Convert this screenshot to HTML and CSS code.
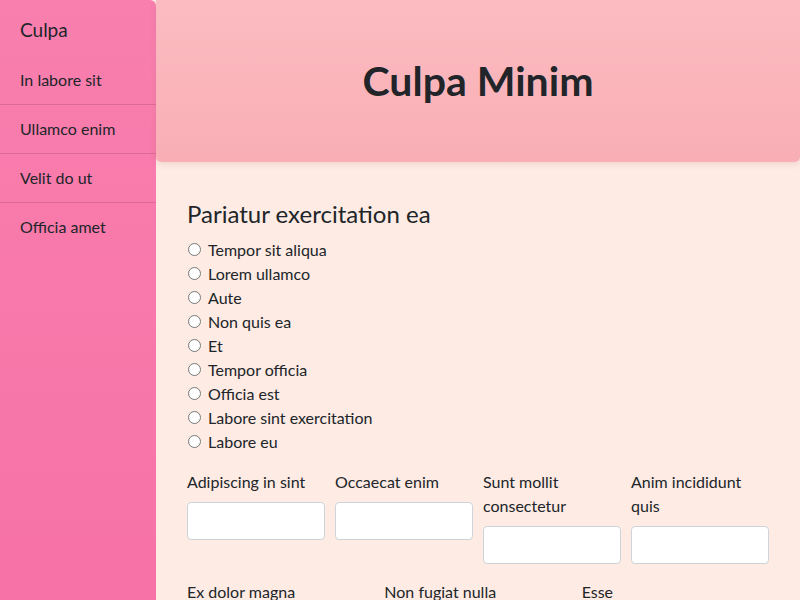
FILE: index.html
```html
<!DOCTYPE html>
<html>
<head>
<meta charset="utf-8">
<link rel="stylesheet" href="styles.css">
</head>
<body>
<div class="app">
  <aside class="sidebar">
    <div class="brand">Culpa</div>
    <nav class="nav">
      <a class="nav-item">In labore sit</a>
      <a class="nav-item">Ullamco enim</a>
      <a class="nav-item">Velit do ut</a>
      <a class="nav-item">Officia amet</a>
    </nav>
  </aside>
  <main class="main">
    <header class="hero"><h1>Culpa Minim</h1></header>
    <section class="content">
      <h2 class="section-title">Pariatur exercitation ea</h2>
      <div class="radios">
        <label class="radio"><input type="radio" name="r"> Tempor sit aliqua</label>
        <label class="radio"><input type="radio" name="r"> Lorem ullamco</label>
        <label class="radio"><input type="radio" name="r"> Aute</label>
        <label class="radio"><input type="radio" name="r"> Non quis ea</label>
        <label class="radio"><input type="radio" name="r"> Et</label>
        <label class="radio"><input type="radio" name="r"> Tempor officia</label>
        <label class="radio"><input type="radio" name="r"> Officia est</label>
        <label class="radio"><input type="radio" name="r"> Labore sint exercitation</label>
        <label class="radio"><input type="radio" name="r"> Labore eu</label>
      </div>
      <div class="row four">
        <div class="field"><label>Adipiscing in sint</label><input type="text"></div>
        <div class="field"><label>Occaecat enim</label><input type="text"></div>
        <div class="field"><label>Sunt mollit consectetur</label><input type="text"></div>
        <div class="field"><label>Anim incididunt quis</label><input type="text"></div>
      </div>
      <div class="row three">
        <div class="field"><label>Ex dolor magna</label><input type="text"></div>
        <div class="field"><label>Non fugiat nulla</label><input type="text"></div>
        <div class="field"><label>Esse</label><input type="text"></div>
      </div>
    </section>
  </main>
</div>
</body>
</html>
```
FILE: styles.css
```css
* { box-sizing: border-box; }
html, body { margin: 0; height: 100%; }
body {
  font-family: Lato, "Open Sans", sans-serif;
  font-size: 16px;
  line-height: 1.5;
  color: #212529;
  background: #fdebe4;
  overflow: hidden;
}
.app { display: flex; height: 600px; }
.sidebar {
  width: 156px;
  flex: none;
  background: linear-gradient(to bottom, #f87fae, #f772a6);
  border-top-right-radius: 6px;
}
.brand {
  font-size: 19px;
  padding: 16px 20px 13px;
  line-height: 27px;
}
.nav { display: flex; flex-direction: column; }
.nav-item {
  font-size: 16px;
  padding: 12px 20px;
  line-height: 24px;
  border-bottom: 1px solid #dc6a96;
}
.nav-item:last-child { border-bottom: none; }
.main { flex: 1; display: flex; flex-direction: column; min-width: 0; }
.hero {
  flex: none;
  height: 162px;
  background: linear-gradient(to bottom, #fbbcc1, #f9aeb5);
  border-radius: 0 0 5px 5px;
  box-shadow: 0 2px 6px rgba(160, 90, 90, 0.15);
  display: flex;
  align-items: center;
  justify-content: center;
}
.hero h1 {
  margin: 0;
  font-size: 41px;
  font-weight: 700;
  line-height: 1.2;
}
.content { padding: 38px 31px 0 31px; }
.section-title {
  margin: 0 0 9px;
  font-size: 24px;
  font-weight: 400;
  line-height: 1.2;
}
.radios { display: flex; flex-direction: column; margin-bottom: 16px; }
.radio { display: flex; align-items: center; height: 24px; font-size: 16px; }
.radio input {
  margin: 0 7px 0 1px;
  width: 13px;
  height: 13px;
}
.row { display: grid; gap: 10px; margin-bottom: 16px; }
.row.four { grid-template-columns: repeat(4, 1fr); }
.row.three { grid-template-columns: repeat(3, 1fr); }
.field { display: flex; flex-direction: column; }
.field label { display: block; margin-bottom: 8px; font-size: 16px; line-height: 24px; }
.field input {
  height: 38px;
  width: 100%;
  border: 1px solid #ced4da;
  border-radius: 4px;
  background: #fff;
  font: inherit;
}
```
